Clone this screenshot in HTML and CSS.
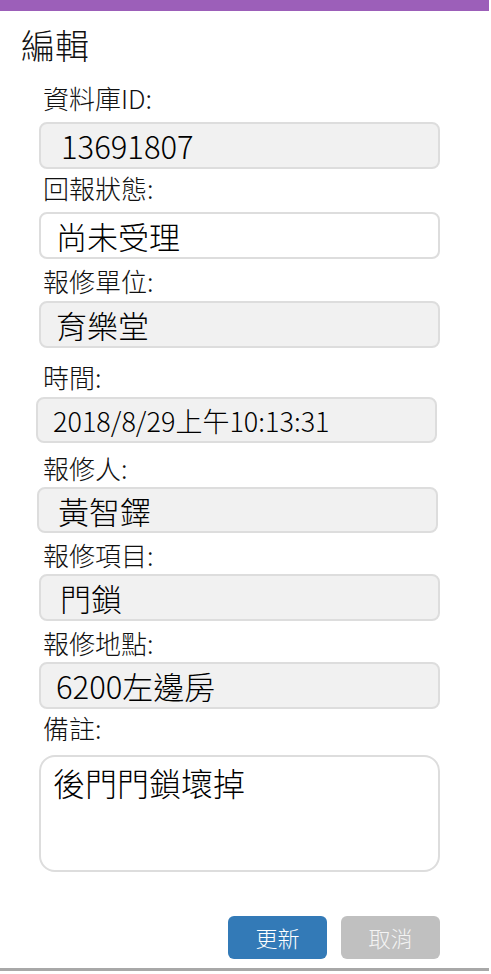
FILE: index.html
```html
<!DOCTYPE html>
<html lang="zh-Hant">
<head>
<meta charset="utf-8">
<title>編輯</title>
<link rel="stylesheet" href="styles.css">
</head>
<body>
<div class="dialog">
  <div class="dialog-bar"></div>
  <h1 class="dialog-title">編輯</h1>
  <form class="form">
    <div class="field field--first field--loose">
      <label class="field-label">資料庫ID:</label>
      <input class="field-input field-input--id" type="text" value="13691807" readonly>
    </div>
    <div class="field field--loose field--close">
      <label class="field-label">回報狀態:</label>
      <input class="field-input field-input--white" type="text" value="尚未受理">
    </div>
    <div class="field">
      <label class="field-label">報修單位:</label>
      <input class="field-input" type="text" value="育樂堂" readonly>
    </div>
    <div class="field field--spaced">
      <label class="field-label">時間:</label>
      <input class="field-input field-input--time" type="text" value="2018/8/29上午10:13:31" readonly>
    </div>
    <div class="field field--mid field--tight">
      <label class="field-label">報修人:</label>
      <input class="field-input field-input--shift" type="text" value="黃智鐸" readonly>
    </div>
    <div class="field field--tight">
      <label class="field-label">報修項目:</label>
      <input class="field-input field-input--item" type="text" value="門鎖" readonly>
    </div>
    <div class="field field--tight">
      <label class="field-label">報修地點:</label>
      <input class="field-input" type="text" value="6200左邊房" readonly>
    </div>
    <div class="field field--close field--wide">
      <label class="field-label">備註:</label>
      <textarea class="field-textarea">後門門鎖壞掉</textarea>
    </div>
    <div class="actions">
      <button type="button" class="btn btn--primary">更新</button>
      <button type="button" class="btn btn--disabled">取消</button>
    </div>
  </form>
</div>
</body>
</html>
```

FILE: styles.css
```css
html, body {
  margin: 0;
  padding: 0;
  background: #ffffff;
}

body {
  font-family: "Noto Sans CJK TC", "Noto Sans", sans-serif;
  color: #111;
}

.dialog {
  width: 489px;
  min-height: 971px;
  box-sizing: border-box;
  border-bottom: 3px solid #a8a8a8;
  background: #fff;
  display: flex;
  flex-direction: column;
}

.dialog-bar {
  height: 11px;
  background: #9c5fb9;
}

.dialog-title {
  margin: 14px 0 0 21px;
  font-size: 34px;
  line-height: 40px;
  font-weight: 300;
  color: #111;
}

.form {
  display: flex;
  flex-direction: column;
  padding-left: 39px;
  width: 401px;
}

.field {
  display: flex;
  flex-direction: column;
  gap: 5px;
  margin-top: 7px;
}

.field--first { margin-top: 18px; }
.field--close { margin-top: 4px; }
.field--mid { margin-top: 10px; }
.field--spaced { margin-top: 14px; }
.field--loose { gap: 9px; }
.field--tight { gap: 4px; }
.field--wide { gap: 12px; }

.field-label {
  font-size: 26px;
  line-height: 30px;
  font-weight: 300;
  padding-left: 4px;
  color: #111;
}

.field-input {
  box-sizing: border-box;
  width: 401px;
  height: 47px;
  margin: 0;
  padding: 0 0 0 15px;
  border: 2px solid #dddddd;
  border-radius: 8px;
  background: #f1f1f1;
  font-family: "Noto Sans CJK TC", "Noto Sans", sans-serif;
  font-size: 31px;
  font-weight: 300;
  color: #000;
  outline: none;
}

.field-input--id {
  padding-left: 20px;
}

.field-input--white {
  background: #ffffff;
}

.field-input--time {
  margin-left: -3px;
  height: 46px;
  padding-left: 15px;
  font-size: 27px;
}

.field-input--shift {
  margin-left: -2px;
  height: 46px;
  padding-left: 19px;
}

.field-input--item {
  padding-left: 19px;
}

.field-textarea {
  box-sizing: border-box;
  width: 401px;
  height: 117px;
  margin: 0;
  padding: 5px 12px;
  border: 2px solid #dddddd;
  border-radius: 16px;
  background: #ffffff;
  font-family: "Noto Sans CJK TC", "Noto Sans", sans-serif;
  font-size: 32px;
  line-height: 40px;
  font-weight: 300;
  color: #000;
  resize: none;
  outline: none;
}

.actions {
  display: flex;
  justify-content: flex-end;
  gap: 14px;
  margin-top: 44px;
}

.btn {
  width: 99px;
  height: 43px;
  border: none;
  border-radius: 6px;
  font-family: "Noto Sans CJK TC", "Noto Sans", sans-serif;
  font-size: 22px;
  font-weight: 300;
  line-height: 43px;
  padding: 0;
  color: #fff;
}

.btn--primary {
  background: #337ab7;
}

.btn--disabled {
  background: #c0c0c0;
  color: #f4f4f4;
}
```
